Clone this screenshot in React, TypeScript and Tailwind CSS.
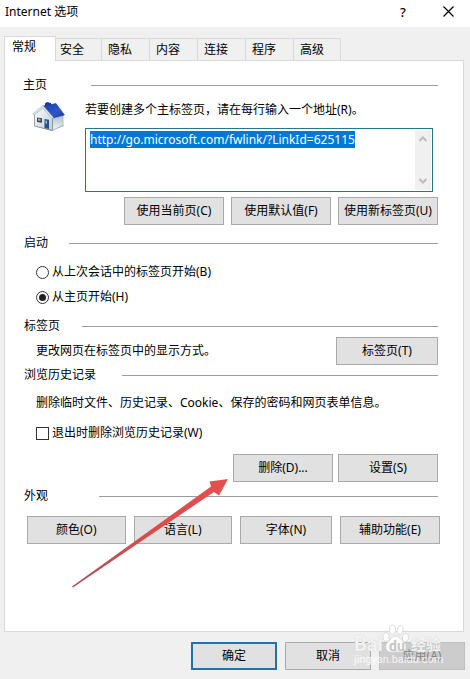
import { useEffect, useRef, useState } from "react";
import type { ButtonHTMLAttributes, ReactNode } from "react";

const TABS = ["安全", "隐私", "内容", "连接", "程序", "高级"];

function PushButton({ className = "", ...rest }: ButtonHTMLAttributes<HTMLButtonElement>) {
  return (
    <button
      type="button"
      className={`h-7 whitespace-nowrap border border-[#a9a9a9] bg-[#e1e1e1] text-center ${className}`}
      {...rest}
    />
  );
}

function SectionHeader({ title, gap }: { title: ReactNode; gap: string }) {
  return (
    <div className={`flex h-4 items-center ${gap}`}>
      <h2>{title}</h2>
      <div className="h-px flex-1 bg-[#9c9c9c]" />
    </div>
  );
}

function HouseIcon() {
  return (
    <svg width="34" height="32" viewBox="0 0 34 32" aria-hidden="true">
      <defs>
        <linearGradient id="roof" x1="0" y1="0" x2="1" y2="1">
          <stop offset="0" stopColor="#1a3fae" />
          <stop offset="0.6" stopColor="#2c56c8" />
          <stop offset="1" stopColor="#173a9c" />
        </linearGradient>
        <linearGradient id="front" x1="0" y1="0" x2="1" y2="1">
          <stop offset="0" stopColor="#ffffff" />
          <stop offset="1" stopColor="#bccbd6" />
        </linearGradient>
        <linearGradient id="side" x1="0" y1="0" x2="0" y2="1">
          <stop offset="0" stopColor="#a9bac8" />
          <stop offset="1" stopColor="#f2f6f8" />
        </linearGradient>
      </defs>
      <path d="M2 25l17 5 13-5-2-3z" fill="#9aa68f" opacity="0.7" />
      <path d="M13 2.500l2-1.500 4 1v4l-6 1z" fill="#1b3c9e" />
      <path d="M20 16l11-3v11.500l-11 5z" fill="url(#side)" stroke="#7f929f" strokeWidth="0.500" />
      <path d="M2.500 13l8.500-7L20.500 16v13.500L2.500 25z" fill="url(#front)" stroke="#71838f" strokeWidth="0.700" />
      <path d="M11 5L24 2.500l8.500 11.500L21 17z" fill="url(#roof)" stroke="#14308a" strokeWidth="0.500" />
      <path d="M11 4.500L.8 13l1.200 1.200 9-7L20 17.500l1.500-1z" fill="#dfe7ee" stroke="#8798a8" strokeWidth="0.500" />
      <path d="M5 16.500l5 .8v4.500l-5-.8z" fill="#3a4750" />
      <path d="M6 17.500l2.500.5v2l-2.500-.5z" fill="#9db6c4" />
      <path d="M12.500 18l4.500.8v9.200l-4.500-1.100z" fill="#27508c" />
      <path d="M13.500 19.500l1.500.3v3l-1.500-.3z" fill="#9fc0e4" />
    </svg>
  );
}

function Watermark() {
  return (
    <div
      aria-hidden="true"
      className="pointer-events-none absolute right-[26px] bottom-[10px] h-[45px] w-[90px] font-['Roboto','Noto_Sans_CJK_SC',sans-serif] text-white/80 text-shadow-[0_0_1px_#bbbbbb]"
    >
      <svg className="absolute top-0 left-[28px]" width="28" height="30" viewBox="0 0 28 30">
        <g fill="#ffffff" stroke="#d4d4d4" strokeWidth="0.800">
          <ellipse cx="4" cy="13" rx="3" ry="4.300" transform="rotate(-12 4 13)" />
          <ellipse cx="10.500" cy="5.500" rx="3" ry="4.500" />
          <ellipse cx="18" cy="6" rx="3" ry="4.500" transform="rotate(14 18 6)" />
          <ellipse cx="23.500" cy="13.500" rx="3" ry="4.200" transform="rotate(12 23.500 13.500)" />
          <path d="M13.500 12c-3.500 0-4.500 3.500-7.500 6-3.500 3-3 10 3 10 3 0 6-.5 9 0 6 .8 8-6 4-9.500-3-2.500-4.500-6.500-8.500-6.500z" />
        </g>
      </svg>
      <span className="absolute top-[9px] left-0 text-[20px] leading-[22px] font-bold">Bai</span>
      <span className="absolute top-[14px] left-[35px] text-[14px] leading-[16px] font-bold text-[#c4c4c4] text-shadow-none">du</span>
      <span className="absolute top-[10px] left-[57px] text-[15px] leading-[22px] font-bold whitespace-nowrap">经验</span>
      <span className="absolute top-[29px] left-0 text-[11px] leading-[14px] whitespace-nowrap text-shadow-none">jingyan.baidu.com</span>
    </div>
  );
}

export default function App() {
  const address = useRef<HTMLTextAreaElement>(null);
  const [start, setStart] = useState("home");

  useEffect(() => {
    address.current?.focus();
    address.current?.select();
  }, []);

  return (
    <main className="relative bg-[#f0f0f0] pb-[9px] font-['Noto_Sans','Noto_Sans_CJK_SC',sans-serif] text-[12px] leading-4 text-black">
      <header className="flex h-[27px] items-center bg-white pb-1 pl-[5px]">
        <h1 className="flex-1">Internet 选项</h1>
        <button type="button" aria-label="帮助" className="w-[46px] text-[13px] font-medium">?</button>
        <button type="button" aria-label="关闭" className="flex w-[44px] justify-center">
          <svg width="11" height="11" viewBox="0 0 11 11" stroke="#000" strokeWidth="1.200">
            <path d="M.5.5l10 10M10.500.5l-10 10" />
          </svg>
        </button>
      </header>

      <nav className="flex items-end px-1 pt-[9px]" role="tablist">
        <button
          type="button"
          role="tab"
          aria-selected="true"
          className="relative z-10 -mb-px h-[25px] w-[52px] border border-b-0 border-[#d9d9d9] bg-white pb-1 pl-[7px] text-left"
        >
          常规
        </button>
        {TABS.map((tab) => (
          <button
            key={tab}
            type="button"
            role="tab"
            aria-selected="false"
            className="h-[22px] w-12 border-t border-r border-[#d9d9d9] pl-[6px] text-left last:w-[47px] nth-2:w-[46px] nth-2:pl-1"
          >
            {tab}
          </button>
        ))}
      </nav>

      <div role="tabpanel" className="mr-[6px] ml-1 border border-[#d9d9d9] bg-white pt-4 pr-[25px] pb-[87px] pl-[19px]">
        <section className="-ml-px">
          <SectionHeader title="主页" gap="gap-11" />
          <div className="mt-2 flex pl-[9px]">
            <HouseIcon />
            <div className="ml-[19px] flex-1 pr-[5px]">
              <label htmlFor="address" className="mt-px block">
                若要创建多个主标签页，请在每行输入一个地址(R)。
              </label>
              <div className="mt-[10px] flex h-16 border border-[#23788c] bg-white p-px">
                <textarea
                  id="address"
                  ref={address}
                  spellCheck={false}
                  defaultValue="http://go.microsoft.com/fwlink/?LinkId=625115"
                  className="min-w-0 flex-1 resize-none overflow-hidden px-[3px] pt-px text-[12px] leading-[17px] outline-none selection:bg-[#0078d7] selection:text-white"
                />
                <div className="flex w-4 flex-col items-center justify-between bg-[#f0f0f0] py-[6px]">
                  <svg width="8" height="6" viewBox="0 0 8 6" fill="none" stroke="#bcbcbc" strokeWidth="2">
                    <path d="M.5 5L4 1.500 7.500 5" />
                  </svg>
                  <svg width="8" height="6" viewBox="0 0 8 6" fill="none" stroke="#bcbcbc" strokeWidth="2">
                    <path d="M.5 1L4 4.500 7.500 1" />
                  </svg>
                </div>
              </div>
            </div>
          </div>
          <div className="mt-[5px] flex justify-end gap-[7px]">
            <PushButton className="w-[100px]">使用当前页(C)</PushButton>
            <PushButton className="w-[100px]">使用默认值(F)</PushButton>
            <PushButton className="w-[100px]">使用新标签页(U)</PushButton>
          </div>
        </section>

        <section className="mt-[10px]">
          <SectionHeader title="启动" gap="gap-[21px]" />
          <div className="mt-[13px] flex flex-col items-start gap-[9px] pl-3">
            {[
              ["session", "从上次会话中的标签页开始(B)"],
              ["home", "从主页开始(H)"],
            ].map(([id, text]) => (
              <label key={id} className="flex items-center gap-[3px]">
                <input
                  type="radio"
                  name="start"
                  checked={start === id}
                  onChange={() => setStart(id)}
                  className="size-[13px] appearance-none rounded-full border border-[#333] bg-white checked:bg-[#222] checked:bg-clip-content checked:p-[2px]"
                />
                {text}
              </label>
            ))}
          </div>
        </section>

        <section className="mt-[13px]">
          <SectionHeader title="标签页" gap="gap-[22px]" />
          <div className="mt-[3px] flex items-center justify-between pl-3">
            <p>更改网页在标签页中的显示方式。</p>
            <PushButton className="w-[102px]">标签页(T)</PushButton>
          </div>
        </section>

        <section className="mt-[2px]">
          <SectionHeader title="浏览历史记录" gap="gap-[26px]" />
          <p className="mt-3 pl-3">删除临时文件、历史记录、Cookie、保存的密码和网页表单信息。</p>
          <label className="mt-[14px] flex items-center gap-[3px] pl-3">
            <input type="checkbox" className="size-[13px] appearance-none border border-[#333] bg-white checked:bg-[#333]" />
            退出时删除浏览历史记录(W)
          </label>
          <div className="mt-[13px] flex justify-end gap-[5px]">
            <PushButton className="w-[100px]">删除(D)...</PushButton>
            <PushButton className="w-[100px]">设置(S)</PushButton>
          </div>
        </section>

        <section className="mt-[6px]">
          <SectionHeader title="外观" gap="gap-[51px]" />
          <div className="mt-3 -mr-[2px] ml-[3px] flex gap-2">
            <PushButton className="flex-1">颜色(O)</PushButton>
            <PushButton className="flex-1">语言(L)</PushButton>
            <PushButton className="w-[92px]">字体(N)</PushButton>
            <PushButton className="w-[100px]">辅助功能(E)</PushButton>
          </div>
        </section>
      </div>

      <footer className="mt-[10px] flex justify-end gap-2 pr-[5px]">
        <button type="button" className="h-7 w-[86px] border-2 border-[#1e73a8] bg-[#e1e1e1]">确定</button>
        <PushButton className="w-[86px]">取消</PushButton>
        <button type="button" disabled className="h-7 w-[86px] border border-[#bfbfbf] bg-[#cccccc] text-[#858585]">
          应用(A)
        </button>
      </footer>

      <svg
        aria-hidden="true"
        className="pointer-events-none absolute top-[479px] left-[72px]"
        width="157"
        height="109"
        viewBox="0 0 157 109"
      >
        <defs>
          <linearGradient id="arrow" x1="0" y1="1" x2="1" y2="0">
            <stop offset="0" stopColor="#a8525a" />
            <stop offset="0.500" stopColor="#d94c4c" />
            <stop offset="1" stopColor="#e45050" />
          </linearGradient>
        </defs>
        <path d="M0 107.500L139 7.500l-1.500-5L156 0l-9 16.500-5-3.500L1 108.500z" fill="url(#arrow)" />
      </svg>
      <Watermark />
    </main>
  );
}
